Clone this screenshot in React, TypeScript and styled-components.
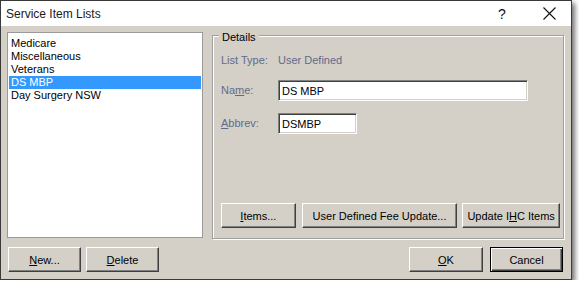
import React from "react";
import styled, { createGlobalStyle } from "styled-components";

const FACE = "#D4D0C8";

const Global = createGlobalStyle`
  html, body { margin: 0; padding: 0; background: #fff; }
  body { font-family: "Liberation Sans", Arial, sans-serif; font-size: 11px; color: #000; }
  * { box-sizing: border-box; }
`;

const Window = styled.div`
  width: 572px;
  height: 280px;
  border: 1px solid #3a3a3a;
  box-shadow: 3px 3px 5px rgba(0, 0, 0, 0.55);
  display: flex;
  flex-direction: column;
  background: ${FACE};
`;

const TitleBar = styled.div`
  height: 25px;
  flex: none;
  background: #fff;
  display: flex;
  align-items: center;
  padding: 0 5px 0 5px;
`;

const Title = styled.span`
  flex: 1;
  font-size: 12px;
  color: #1a1a1a;
  padding-top: 1px;
`;

const CaptionButton = styled.span<{ $w: number }>`
  width: ${(p) => p.$w}px;
  height: 25px;
  display: flex;
  align-items: center;
  justify-content: center;
  color: #111;
  font-size: 14px;
`;

const Gap = styled.span<{ $w: number }>`
  width: ${(p) => p.$w}px;
`;

const Client = styled.div`
  flex: 1;
  display: flex;
  flex-direction: column;
  padding: 6px 6px 7px 6px;
`;

const Main = styled.div`
  display: grid;
  grid-template-columns: 196px 352px;
  column-gap: 9px;
  height: 207px;
`;

const ListBox = styled.div`
  height: 206px;
  background: #fff;
  border: 1px solid #9a9a9a;
  padding: 4px 1px;
`;

const ListItem = styled.div<{ $selected?: boolean }>`
  height: 13px;
  line-height: 13px;
  padding-left: 2px;
  white-space: nowrap;
  background: ${(p) => (p.$selected ? "#3399FF" : "transparent")};
  color: ${(p) => (p.$selected ? "#fff" : "#000")};
`;

const GroupBox = styled.div`
  margin-top: 3px;
  height: 204px;
  border: 1px solid #a0a0a0;
  box-shadow: inset 1px 1px 0 #fff, 1px 1px 0 #fff;
  padding: 0 3px 10px 8px;
  display: flex;
  flex-direction: column;
`;

const Legend = styled.div`
  align-self: flex-start;
  margin: -5px 0 0 -2px;
  padding: 0 3px;
  background: ${FACE};
  line-height: 13px;
  color: #000;
`;

const Row = styled.div<{ $top: number; $h: number }>`
  display: flex;
  align-items: center;
  margin-top: ${(p) => p.$top}px;
  height: ${(p) => p.$h}px;
`;

const Label = styled.span`
  width: 57px;
  flex: none;
  color: #5f6b8a;
  line-height: 13px;
  white-space: nowrap;
`;

const Value = styled.span`
  color: #5f6b8a;
  line-height: 13px;
`;

const TextInput = styled.div<{ $w: number }>`
  width: ${(p) => p.$w}px;
  height: 21px;
  background: #fff;
  border-top: 1px solid #808080;
  border-left: 1px solid #808080;
  border-bottom: 1px solid #fff;
  border-right: 1px solid #fff;
  box-shadow: inset 1px 1px 0 #404040, inset -1px -1px 0 #d4d0c8;
  padding-left: 3px;
  display: flex;
  align-items: center;
  color: #000;
`;

const ButtonRow = styled.div<{ $auto?: boolean; $top?: number }>`
  display: flex;
  align-items: center;
  margin-top: ${(p) => (p.$auto ? "auto" : `${p.$top ?? 0}px`)};
`;

const Button = styled.div<{ $w: number; $gap?: number; $default?: boolean }>`
  width: ${(p) => p.$w}px;
  height: 25px;
  margin-left: ${(p) => p.$gap ?? 0}px;
  display: flex;
  align-items: center;
  justify-content: center;
  background: ${FACE};
  color: #000;
  white-space: nowrap;
  ${(p) =>
    p.$default
      ? `border: 1px solid #000;
         box-shadow: inset 1px 1px 0 #fff, inset -1px -1px 0 #404040, inset -2px -2px 0 #808080;`
      : `border-top: 1px solid #fff;
         border-left: 1px solid #fff;
         border-right: 1px solid #404040;
         border-bottom: 1px solid #404040;
         box-shadow: inset -1px -1px 0 #808080;`}
`;

const Spacer = styled.div`
  flex: 1;
`;

const items = ["Medicare", "Miscellaneous", "Veterans", "DS MBP", "Day Surgery NSW"];

export default function App() {
  return (
    <>
      <Global />
      <Window>
        <TitleBar>
          <Title>Service Item Lists</Title>
          <CaptionButton $w={20}>?</CaptionButton>
          <Gap $w={20} />
          <CaptionButton $w={34}>
            <svg width="13" height="13" viewBox="0 0 13 13">
              <path d="M0.5 0.5 L12.5 12.5 M12.5 0.5 L0.5 12.5" stroke="#111" strokeWidth="1.1" fill="none" />
            </svg>
          </CaptionButton>
        </TitleBar>
        <Client>
          <Main>
            <ListBox>
              {items.map((it) => (
                <ListItem key={it} $selected={it === "DS MBP"}>
                  {it}
                </ListItem>
              ))}
            </ListBox>
            <GroupBox>
              <Legend>Details</Legend>
              <Row $top={10} $h={13}>
                <Label>List Type:</Label>
                <Value>User Defined</Value>
              </Row>
              <Row $top={13} $h={21}>
                <Label>
                  Na<u>m</u>e:
                </Label>
                <TextInput $w={250}>DS MBP</TextInput>
              </Row>
              <Row $top={12} $h={21}>
                <Label>
                  <u>A</u>bbrev:
                </Label>
                <TextInput $w={79}>DSMBP</TextInput>
              </Row>
              <ButtonRow $auto>
                <Button $w={75}>
                  <u>I</u>tems...
                </Button>
                <Button $w={156} $gap={6}>
                  User Defined Fee Update...
                </Button>
                <Button $w={98} $gap={5}>
                  Update I<u>H</u>C Items
                </Button>
              </ButtonRow>
            </GroupBox>
          </Main>
          <ButtonRow $top={8}>
            <Button $w={73} $gap={1}>
              <u>N</u>ew...
            </Button>
            <Button $w={73} $gap={5}>
              <u>D</u>elete
            </Button>
            <Spacer />
            <Button $w={74}>
              <u>O</u>K
            </Button>
            <Button $w={73} $gap={7} $default>
              Cancel
            </Button>
            <Gap $w={2} />
          </ButtonRow>
        </Client>
      </Window>
    </>
  );
}
